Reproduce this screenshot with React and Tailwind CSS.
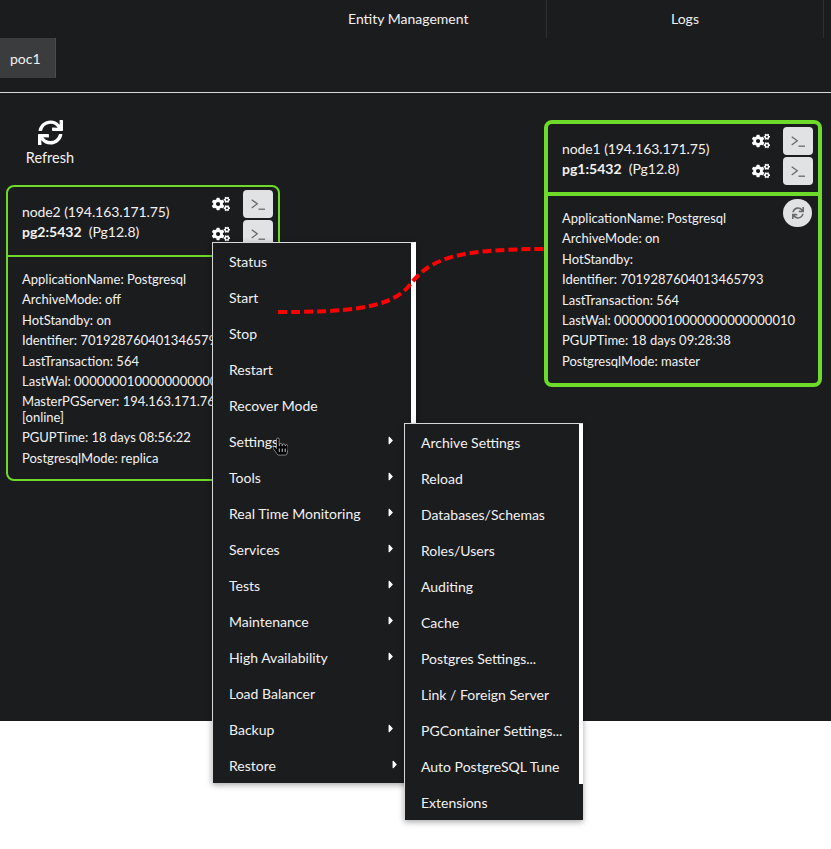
import { FaCogs, FaSync, FaCaretRight, FaHandPointer } from 'react-icons/fa'

const node1Rows = [
  'ApplicationName: Postgresql',
  'ArchiveMode: on',
  'HotStandby:',
  'Identifier: 7019287604013465793',
  'LastTransaction: 564',
  'LastWal: 000000010000000000000010',
  'PGUPTime: 18 days 09:28:38',
  'PostgresqlMode: master',
]

const node2Rows = [
  'ApplicationName: Postgresql',
  'ArchiveMode: off',
  'HotStandby: on',
  'Identifier: 7019287604013465793',
  'LastTransaction: 564',
  'LastWal: 000000010000000000000010',
  'MasterPGServer: 194.163.171.76:5432 [online]',
  'PGUPTime: 18 days 08:56:22',
  'PostgresqlMode: replica',
]

const mainMenu = [
  ['Status'],
  ['Start'],
  ['Stop'],
  ['Restart'],
  ['Recover Mode'],
  ['Settings', true],
  ['Tools', true],
  ['Real Time Monitoring', true],
  ['Services', true],
  ['Tests', true],
  ['Maintenance', true],
  ['High Availability', true],
  ['Load Balancer'],
  ['Backup', true],
]

const subMenu = [
  'Archive Settings',
  'Reload',
  'Databases/Schemas',
  'Roles/Users',
  'Auditing',
  'Cache',
  'Postgres Settings...',
  'Link / Foreign Server',
  'PGContainer Settings...',
  'Auto PostgreSQL Tune',
  'Extensions',
]

const TerminalButton = () => (
  <div className="w-[30px] h-[28px] rounded bg-[#e1e2e4] flex items-center justify-center">
    <svg width="14" height="11" viewBox="0 0 14 11" fill="none" stroke="#6a6b6e" strokeWidth="1.3">
      <path d="M0.7 0.7 L6.3 4.8 L0.7 9" />
      <path d="M7.5 10.2 H14" />
    </svg>
  </div>
)

const ActionRow = () => (
  <div className="flex items-center gap-[13px]">
    <FaCogs className="w-[18px] h-[18px] text-white" />
    <TerminalButton />
  </div>
)

const NodeCard = ({ className, headerClass, name, pg, rows, bodyClass, showSync }) => (
  <div className={`absolute border-[#6edb2a] rounded-lg bg-[#1b1c1e] text-[#f2f2f2] ${className}`}>
    <div className={`relative border-[#6edb2a] pl-[14px] pt-[15px] text-[14px] leading-[20.4px] ${headerClass}`}>
      <div className="tracking-[-0.09px]">{name} (194.163.171.75)</div>
      <div><b>{pg}:5432</b>&nbsp; (Pg12.8)</div>
      <div className="absolute right-[5px] top-[3px] flex flex-col gap-[2px]">
        <ActionRow />
        <ActionRow />
      </div>
    </div>
    <div className={`relative pl-[14px] pr-[10px] pt-[15px] text-[13px] leading-[15.4px] ${bodyClass}`}>
      {showSync && (
        <div className="absolute right-[6px] top-[3px] w-[29px] h-[28px] rounded-full bg-[#e1e2e4] flex items-center justify-center">
          <FaSync className="w-[12px] h-[12px] text-[#6a6b6e]" />
        </div>
      )}
      {rows.map((row) => (
        <div key={row} className="mb-[5px]">{row}</div>
      ))}
    </div>
  </div>
)

const MenuItem = ({ label, arrow, arrowClass = 'right-[15px]' }) => (
  <div className="relative h-[36px] flex items-center pl-[16px] whitespace-nowrap">
    {label}
    {arrow && <FaCaretRight className={`absolute ${arrowClass} top-[11px] w-[10px] h-[13px] text-white`} />}
  </div>
)

export default function App() {
  return (
    <div className="relative w-[831px] h-[849px] bg-white overflow-hidden text-[#f2f2f2] font-['Lato','Liberation_Sans',sans-serif]">
      <div className="h-[721px] bg-[#1b1c1e]">
        <div className="h-[38px] flex text-[14px]">
          <div className="w-[547px] pl-[348px] pt-[8px] border-r border-[#2e2f33]">Entity Management</div>
          <div className="w-[277px] text-center pt-[8px] border-r border-[#2e2f33]">Logs</div>
        </div>
        <div className="h-[54px] border-b border-[#d9d9d9] box-content">
          <div className="w-[56px] h-[40px] bg-[#3b3c3e] border-r border-[#4a4b4d] flex items-center pl-[10px] text-[14px]">poc1</div>
        </div>
        <div className="w-[100px] flex flex-col items-center pt-[27px] text-[14.5px]">
          <FaSync className="w-[25px] h-[25px] text-white" />
          <div className="mt-[2px]">Refresh</div>
        </div>
      </div>

      <NodeCard
        className="left-[6px] top-[185px] w-[274px] border-2"
        headerClass="h-[70px] border-b-2"
        name="node2"
        pg="pg2"
        rows={node2Rows}
        bodyClass="h-[222px]"
      />
      <NodeCard
        className="left-[544px] top-[120px] w-[278px] border-4"
        headerClass="h-[72px] border-b-4"
        name="node1"
        pg="pg1"
        rows={node1Rows}
        bodyClass="h-[187px]"
        showSync
      />

      {/* main context menu */}
      <div className="absolute left-[212px] top-[242px] w-[204px] h-[541px] text-[14px] bg-[#1b1c1e] border-t border-l border-[#d9d9d9] border-r-[5px] border-r-white shadow-[0_2px_6px_rgba(0,0,0,0.35)]">
        {mainMenu.map(([label, arrow]) => (
          <MenuItem key={label} label={label} arrow={arrow} />
        ))}
        <MenuItem label="Restore" arrow arrowClass="right-[11px]" />
      </div>

      {/* settings submenu */}
      <div className="absolute left-[404px] top-[423px] w-[179px] h-[397px] text-[14px] bg-[#1b1c1e] border-t border-l border-[#d9d9d9] shadow-[0_2px_6px_rgba(0,0,0,0.35)]">
        <div className="absolute right-0 top-0 w-[4px] h-[360px] bg-white" />
        {subMenu.map((label) => (
          <MenuItem key={label} label={label} />
        ))}
      </div>

      <svg className="absolute left-0 top-0 pointer-events-none" width="831" height="849" fill="none">
        <path d="M278 312 C 340 312 388 310 408 287 C 428 262 445 249 545 249" stroke="#ff0000" strokeWidth="4" strokeDasharray="9 4" />
      </svg>

      <FaHandPointer className="absolute left-[273px] top-[436px] w-[15px] h-[21px] text-black stroke-white stroke-[14px]" />
    </div>
  )
}
